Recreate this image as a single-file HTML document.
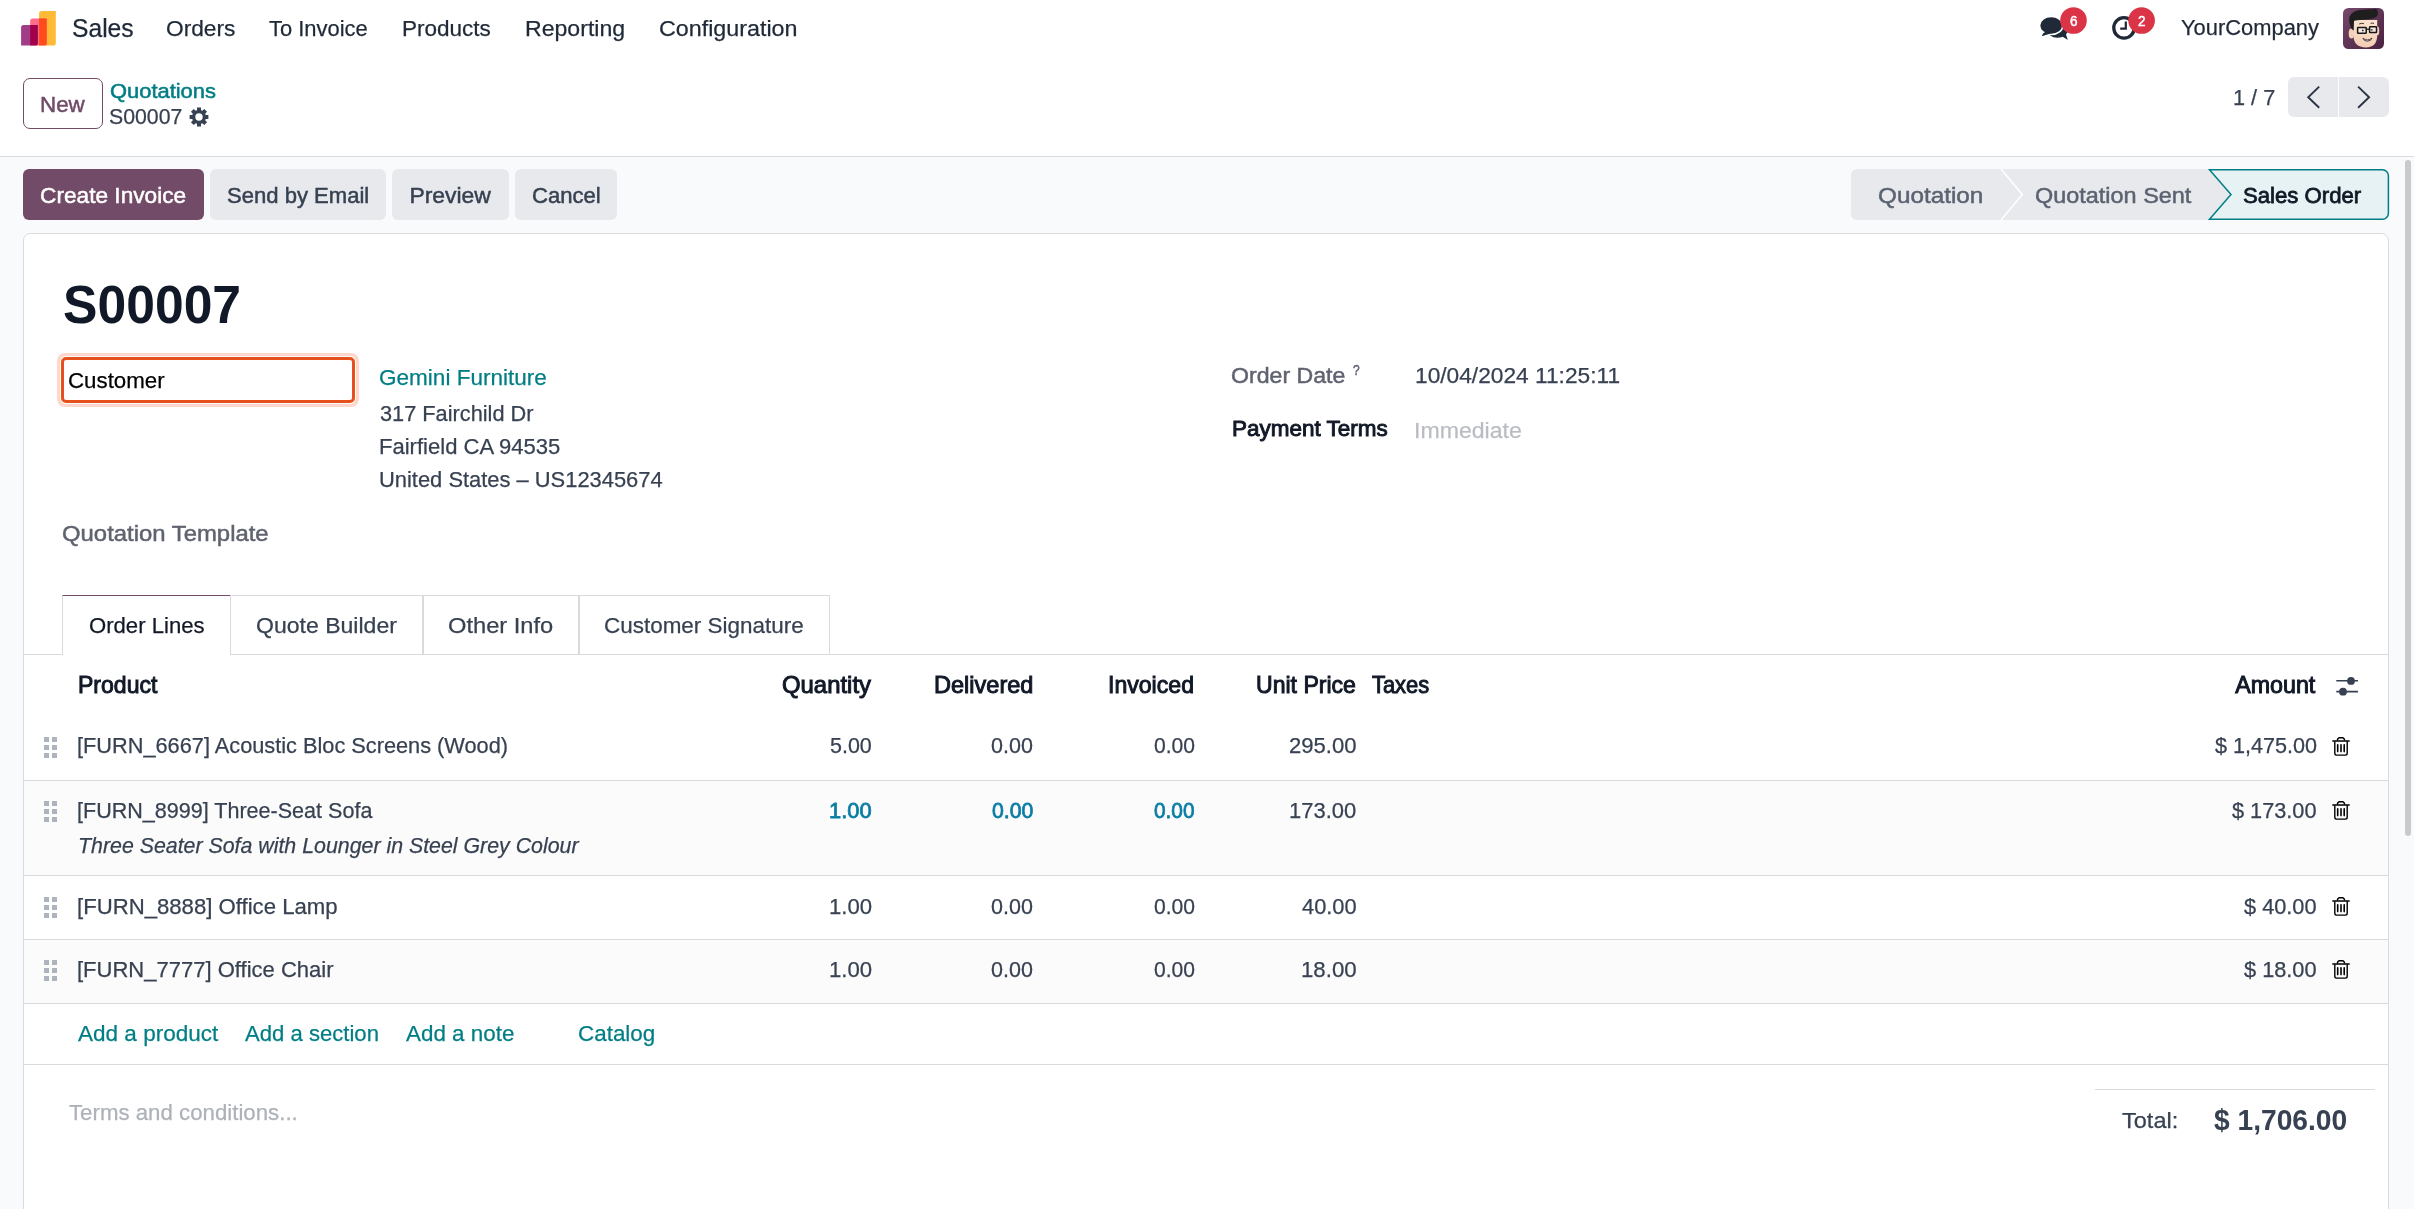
<!DOCTYPE html>
<html><head><meta charset="utf-8"><title>S00007</title>
<style>
html,body{margin:0;padding:0;}
body{width:2414px;height:1209px;overflow:hidden;position:relative;background:#F9FAFB;font-family:"Liberation Sans",sans-serif;}
.a{position:absolute;}
.t{position:absolute;white-space:pre;transform-origin:0 0;font-family:"Liberation Sans",sans-serif;-webkit-text-stroke-width:0.25px;}
.tm{-webkit-text-stroke-width:0.5px;}
.tM{-webkit-text-stroke-width:0.8px;}
.tH{-webkit-text-stroke-width:0.95px;}
.tb{font-weight:bold;}
.tb0{-webkit-text-stroke-width:0;}
.ti{font-style:italic;}
.hd{width:4.7px;height:4.7px;background:#ADB4BC;}
.ln{position:absolute;left:24px;width:2364px;height:1px;background:#D9DBDF;}
.btn2{position:absolute;top:169px;height:51px;background:#E7E9ED;border-radius:6px;}
.tab{position:absolute;top:595px;height:59px;box-sizing:border-box;border:1px solid #D8DADD;border-bottom:none;background:#fff;}
</style></head><body>
<!-- top white area -->
<div class="a" style="left:0;top:0;width:2414px;height:156px;background:#fff"></div>
<div class="a" style="left:0;top:156px;width:2414px;height:1px;background:#D8DADD"></div>
<!-- logo -->
<svg class="a" style="left:21px;top:11px" width="35" height="35" viewBox="0 0 35 35">
<defs>
<clipPath id="cp1"><path d="M2.70 14.10 H16.80 V32.00 A2.6 2.6 0 0 1 14.20 34.60 H0.10 V16.70 A2.6 2.6 0 0 1 2.70 14.10 Z"/></clipPath>
<clipPath id="cp2"><path d="M11.80 7.40 H25.70 V32.00 A2.6 2.6 0 0 1 23.10 34.60 H9.20 V10.00 A2.6 2.6 0 0 1 11.80 7.40 Z"/></clipPath>
</defs>
<path d="M20.70 0.10 H34.80 V32.00 A2.6 2.6 0 0 1 32.20 34.60 H18.10 V2.70 A2.6 2.6 0 0 1 20.70 0.10 Z" fill="#FDBA36"/>
<path d="M11.80 7.40 H25.70 V32.00 A2.6 2.6 0 0 1 23.10 34.60 H9.20 V10.00 A2.6 2.6 0 0 1 11.80 7.40 Z" fill="#FF6D88"/>
<path d="M2.70 14.10 H16.80 V32.00 A2.6 2.6 0 0 1 14.20 34.60 H0.10 V16.70 A2.6 2.6 0 0 1 2.70 14.10 Z" fill="#A13C86"/>
<path d="M11.80 7.40 H25.70 V32.00 A2.6 2.6 0 0 1 23.10 34.60 H9.20 V10.00 A2.6 2.6 0 0 1 11.80 7.40 Z" fill="#A2004A" clip-path="url(#cp1)"/>
<path d="M20.70 0.10 H34.80 V32.00 A2.6 2.6 0 0 1 32.20 34.60 H18.10 V2.70 A2.6 2.6 0 0 1 20.70 0.10 Z" fill="#FF4A1C" clip-path="url(#cp2)"/>
</svg>
<!-- chat icon -->
<svg class="a" style="left:2030px;top:0px" width="130" height="50" viewBox="2030 0 130 50">
<ellipse cx="2057.5" cy="29.8" rx="10.5" ry="8" fill="#1F2937"/>
<path d="M2060 35 L2067.8 39.9 L2065.5 33 Z" fill="#1F2937"/>
<path d="M2045 30.5 L2041.8 35.9 L2050.5 33.2 Z" fill="#1F2937" stroke="#fff" stroke-width="0"/>
<ellipse cx="2051.2" cy="25.5" rx="11.7" ry="9" fill="#1F2937" stroke="#fff" stroke-width="1.6"/>
<path d="M2045.5 31 L2042 35.9 L2051 33.4 Z" fill="#1F2937"/>
<circle cx="2073.5" cy="20.5" r="13.3" fill="#DC3447"/>
<circle cx="2124" cy="27.9" r="10.2" fill="none" stroke="#1F2937" stroke-width="3.3"/>
<path d="M2125.8 21.4 V28.6 H2120.2" fill="none" stroke="#1F2937" stroke-width="2.2"/>
<circle cx="2141.6" cy="20.5" r="13.3" fill="#DC3447"/>
</svg>
<!-- avatar -->
<svg class="a" style="left:2343px;top:8px" width="41" height="41" viewBox="0 0 41 41">
<defs><linearGradient id="ag" x1="0" y1="0" x2="1" y2="1"><stop offset="0" stop-color="#74496B"/><stop offset="1" stop-color="#4A2140"/></linearGradient>
<linearGradient id="sk" x1="0" y1="0" x2="0" y2="1"><stop offset="0" stop-color="#FBE3CF"/><stop offset="1" stop-color="#F3CDB3"/></linearGradient></defs>
<rect x="0" y="0" width="41" height="41" rx="5.5" fill="url(#ag)"/>
<ellipse cx="8.4" cy="25.5" rx="2.7" ry="5" fill="#F4D0B8"/>
<ellipse cx="34.6" cy="23" rx="1.6" ry="4.4" fill="#F4D0B8"/>
<path d="M10.4 12 H34.2 V27 Q34.2 39.4 23 39.4 Q10.4 39.4 10.4 27 Z" fill="url(#sk)"/>
<path d="M6.3 9 Q9 2.6 17 1.9 Q25 1.2 31 1.2 L31.6 0.4 Q35.6 1.6 34.8 4.6 Q35.4 8 33 9 Q28 11.6 20 11.8 Q13 12.1 11 13 L10.6 22.5 Q8.6 21.5 7.8 19.5 Q5.6 14 6.3 9 Z" fill="#1E1E1E"/>
<path d="M16.2 16 Q18.5 14.8 20.8 15.6 M27.6 15.4 Q29.4 14.6 31 15.4" fill="none" stroke="#333" stroke-width="1"/>
<rect x="14.6" y="19.4" width="8.6" height="5.9" rx="0.6" fill="#F6E9E2" stroke="#151515" stroke-width="1.5"/>
<rect x="26.6" y="18.8" width="6.9" height="5.7" rx="0.6" fill="#F6E9E2" stroke="#151515" stroke-width="1.5"/>
<path d="M23.2 21.2 H26.6" stroke="#151515" stroke-width="1.2"/>
<circle cx="19.8" cy="22.4" r="0.9" fill="#333"/><circle cx="28.8" cy="21.8" r="0.9" fill="#333"/>
<path d="M19.9 30.2 Q24.5 33.8 29 30 Q28.5 32.8 24.4 33.2 Q20.8 33.2 19.9 30.2 Z" fill="#fff" stroke="#3a2a2a" stroke-width="0.9"/>
</svg>
<!-- new button -->
<div class="a" style="left:23px;top:78px;width:78px;height:49px;border:1px solid #714B67;border-radius:7px;background:#fff"></div>
<!-- gear -->
<svg class="a" style="left:189.3px;top:106.7px" width="20" height="20" viewBox="0 0 20 20"><path d="M8.00 3.29 L8.00 0.61 L12.00 0.61 L12.00 3.29 L13.33 3.84 L15.23 1.95 L18.05 4.77 L16.16 6.67 L16.71 8.00 L19.39 8.00 L19.39 12.00 L16.71 12.00 L16.16 13.33 L18.05 15.23 L15.23 18.05 L13.33 16.16 L12.00 16.71 L12.00 19.39 L8.00 19.39 L8.00 16.71 L6.67 16.16 L4.77 18.05 L1.95 15.23 L3.84 13.33 L3.29 12.00 L0.61 12.00 L0.61 8.00 L3.29 8.00 L3.84 6.67 L1.95 4.77 L4.77 1.95 L6.67 3.84 Z M13.70 10.00 A3.7 3.7 0 1 0 6.30 10.00 A3.7 3.7 0 1 0 13.70 10.00 Z" fill="#374151" fill-rule="evenodd"/></svg>
<!-- pager -->
<div class="a" style="left:2288px;top:77px;width:101px;height:40px;background:#E7E9ED;border-radius:6px"></div>
<div class="a" style="left:2338px;top:77px;width:1px;height:40px;background:#fff"></div>
<svg class="a" style="left:2288px;top:77px" width="101" height="40" viewBox="0 0 101 40">
<path d="M31.2 9.6 L20.2 20.2 L31.2 30.8" fill="none" stroke="#2B3544" stroke-width="1.9"/>
<path d="M70.1 9.6 L81.1 20.2 L70.1 30.8" fill="none" stroke="#2B3544" stroke-width="1.9"/>
</svg>
<!-- action buttons -->
<div class="btn2" style="left:23px;width:181px;background:#714B67"></div>
<div class="btn2" style="left:210px;width:176px"></div>
<div class="btn2" style="left:392px;width:117px"></div>
<div class="btn2" style="left:515px;width:102px"></div>
<!-- statusbar -->
<svg class="a" style="left:1851px;top:169px" width="540" height="52" viewBox="0 0 540 52">
<path d="M6 0 H358.5 L380 25.5 L358.5 51 H6 A6 6 0 0 1 0 45 V6 A6 6 0 0 1 6 0 Z" fill="#E7E9ED"/>
<path d="M150 0 L171.3 25.5 L150 51" stroke="#fff" stroke-width="1.6" fill="none"/>
<path d="M358.5 0.75 H531.5 A6 6 0 0 1 537.4 6.75 V44.25 A6 6 0 0 1 531.5 50.25 H358.5 L380 25.5 Z" fill="#E6F2F3" stroke="#017E84" stroke-width="1.5"/>
</svg>
<!-- scrollbar thumb -->
<div class="a" style="left:2405px;top:160px;width:6px;height:676px;border-radius:3px;background:#C9CACB"></div>
<!-- sheet -->
<div class="a" style="left:23px;top:233px;width:2364px;height:1100px;border:1px solid #D8DADD;border-radius:7.5px;background:#fff"></div>
<!-- customer input -->
<div class="a" style="left:57px;top:353px;width:302px;height:54px;border-radius:8px;background:#FFD6CA"></div>
<div class="a" style="left:60px;top:356px;width:296px;height:48px;border-radius:6px;background:#fff"></div>
<div class="a" style="left:61px;top:357px;width:288px;height:40px;border:3px solid #E6501B;border-radius:5px;background:#fff"></div>
<!-- tabs -->
<div class="a" style="left:24px;top:654px;width:2364px;height:1px;background:#D8DADD"></div>
<div class="tab" style="left:62px;width:169px;height:60px;border-top-color:#714B67"></div>
<div class="tab" style="left:230px;width:193px"></div>
<div class="tab" style="left:423px;width:156px"></div>
<div class="tab" style="left:579px;width:251px"></div>
<!-- stripes -->
<div class="a" style="left:24px;top:781px;width:2364px;height:94px;background:#FBFBFB"></div>
<div class="a" style="left:24px;top:940px;width:2364px;height:63px;background:#FBFBFB"></div>
<div class="ln" style="top:780px"></div>
<div class="ln" style="top:875px"></div>
<div class="ln" style="top:939px"></div>
<div class="ln" style="top:1003px"></div>
<div class="ln" style="top:1064px"></div>
<div class="a hd" style="left:44.3px;top:737.05px"></div>
<div class="a hd" style="left:44.3px;top:745.05px"></div>
<div class="a hd" style="left:44.3px;top:753.05px"></div>
<div class="a hd" style="left:52.3px;top:737.05px"></div>
<div class="a hd" style="left:52.3px;top:745.05px"></div>
<div class="a hd" style="left:52.3px;top:753.05px"></div>
<div class="a hd" style="left:44.3px;top:801.05px"></div>
<div class="a hd" style="left:44.3px;top:809.05px"></div>
<div class="a hd" style="left:44.3px;top:817.05px"></div>
<div class="a hd" style="left:52.3px;top:801.05px"></div>
<div class="a hd" style="left:52.3px;top:809.05px"></div>
<div class="a hd" style="left:52.3px;top:817.05px"></div>
<div class="a hd" style="left:44.3px;top:897.35px"></div>
<div class="a hd" style="left:44.3px;top:905.35px"></div>
<div class="a hd" style="left:44.3px;top:913.35px"></div>
<div class="a hd" style="left:52.3px;top:897.35px"></div>
<div class="a hd" style="left:52.3px;top:905.35px"></div>
<div class="a hd" style="left:52.3px;top:913.35px"></div>
<div class="a hd" style="left:44.3px;top:959.95px"></div>
<div class="a hd" style="left:44.3px;top:967.95px"></div>
<div class="a hd" style="left:44.3px;top:975.95px"></div>
<div class="a hd" style="left:52.3px;top:959.95px"></div>
<div class="a hd" style="left:52.3px;top:967.95px"></div>
<div class="a hd" style="left:52.3px;top:975.95px"></div>
<svg class="a" style="left:2332px;top:736.7px" width="18" height="19" viewBox="0 0 18 19"><path d="M5.3 3.6 Q5.6 0.7 7.6 0.7 H10.4 Q12.3 0.7 12.7 3.6" fill="none" stroke="#000" stroke-width="1.4"/><path d="M0.3 4 H17.7" stroke="#000" stroke-width="1.5"/><path d="M2.8 4.3 V16.3 Q2.8 18.1 4.6 18.1 H13.4 Q15.2 18.1 15.2 16.3 V4.3" fill="none" stroke="#000" stroke-width="1.4"/><path d="M5.7 7.8 V14.6 M9 7.8 V14.6 M12.2 7.8 V14.6" stroke="#000" stroke-width="1.6" stroke-linecap="round"/></svg>
<svg class="a" style="left:2332px;top:800.9px" width="18" height="19" viewBox="0 0 18 19"><path d="M5.3 3.6 Q5.6 0.7 7.6 0.7 H10.4 Q12.3 0.7 12.7 3.6" fill="none" stroke="#000" stroke-width="1.4"/><path d="M0.3 4 H17.7" stroke="#000" stroke-width="1.5"/><path d="M2.8 4.3 V16.3 Q2.8 18.1 4.6 18.1 H13.4 Q15.2 18.1 15.2 16.3 V4.3" fill="none" stroke="#000" stroke-width="1.4"/><path d="M5.7 7.8 V14.6 M9 7.8 V14.6 M12.2 7.8 V14.6" stroke="#000" stroke-width="1.6" stroke-linecap="round"/></svg>
<svg class="a" style="left:2332px;top:897.2px" width="18" height="19" viewBox="0 0 18 19"><path d="M5.3 3.6 Q5.6 0.7 7.6 0.7 H10.4 Q12.3 0.7 12.7 3.6" fill="none" stroke="#000" stroke-width="1.4"/><path d="M0.3 4 H17.7" stroke="#000" stroke-width="1.5"/><path d="M2.8 4.3 V16.3 Q2.8 18.1 4.6 18.1 H13.4 Q15.2 18.1 15.2 16.3 V4.3" fill="none" stroke="#000" stroke-width="1.4"/><path d="M5.7 7.8 V14.6 M9 7.8 V14.6 M12.2 7.8 V14.6" stroke="#000" stroke-width="1.6" stroke-linecap="round"/></svg>
<svg class="a" style="left:2332px;top:960.2px" width="18" height="19" viewBox="0 0 18 19"><path d="M5.3 3.6 Q5.6 0.7 7.6 0.7 H10.4 Q12.3 0.7 12.7 3.6" fill="none" stroke="#000" stroke-width="1.4"/><path d="M0.3 4 H17.7" stroke="#000" stroke-width="1.5"/><path d="M2.8 4.3 V16.3 Q2.8 18.1 4.6 18.1 H13.4 Q15.2 18.1 15.2 16.3 V4.3" fill="none" stroke="#000" stroke-width="1.4"/><path d="M5.7 7.8 V14.6 M9 7.8 V14.6 M12.2 7.8 V14.6" stroke="#000" stroke-width="1.6" stroke-linecap="round"/></svg>
<!-- sliders icon -->
<svg class="a" style="left:2336px;top:676px" width="23" height="21" viewBox="0 0 23 21">
<path d="M0.3 4.8 H22 M0.3 15.6 H22" stroke="#374151" stroke-width="1.6"/>
<circle cx="15" cy="4.9" r="3.9" fill="#374151"/>
<circle cx="7" cy="15.7" r="3.9" fill="#374151"/>
</svg>
<!-- total line -->
<div class="a" style="left:2095px;top:1089px;width:280px;height:1px;background:#D8DADD"></div>
<div class="a" style="left:0;top:0;width:2414px;height:1209px;will-change:transform">
<div class="t" style="left:71.85px;top:16px;font-size:25.29px;line-height:25.29px;color:#1F2937;transform:scaleX(0.9749);">Sales</div>
<div class="t" style="left:166.23px;top:17px;font-size:22.9px;line-height:22.9px;color:#1F2937;transform:scaleX(0.9918);">Orders</div>
<div class="t" style="left:269.32px;top:17px;font-size:22.9px;line-height:22.9px;color:#1F2937;transform:scaleX(0.9583);">To Invoice</div>
<div class="t" style="left:402.14px;top:17px;font-size:22.9px;line-height:22.9px;color:#1F2937;transform:scaleX(0.9839);">Products</div>
<div class="t" style="left:524.92px;top:17px;font-size:22.9px;line-height:22.9px;color:#1F2937;transform:scaleX(1.0085);">Reporting</div>
<div class="t" style="left:658.61px;top:17px;font-size:22.9px;line-height:22.9px;color:#1F2937;transform:scaleX(1.0172);">Configuration</div>
<div class="t" style="left:2180.92px;top:16px;font-size:22.9px;line-height:22.9px;color:#1F2937;transform:scaleX(0.9564);">YourCompany</div>
<div class="t tm" style="left:40.27px;top:93px;font-size:22.9px;line-height:22.9px;color:#714B67;transform:scaleX(0.9768);">New</div>
<div class="t tm" style="left:110.28px;top:82px;font-size:19.48px;line-height:19.48px;color:#017E84;transform:scaleX(1.1251);">Quotations</div>
<div class="t" style="left:109.19px;top:105px;font-size:22.9px;line-height:22.9px;color:#374151;transform:scaleX(0.9297);">S00007</div>
<div class="t" style="left:2232.97px;top:86px;font-size:22.9px;line-height:22.9px;color:#374151;transform:scaleX(0.9475);">1 / 7</div>
<div class="t tm" style="left:40.26px;top:184px;font-size:22.9px;line-height:22.9px;color:#FFFFFF;transform:scaleX(0.9907);">Create Invoice</div>
<div class="t tm" style="left:226.88px;top:184px;font-size:22.9px;line-height:22.9px;color:#374151;transform:scaleX(0.9636);">Send by Email</div>
<div class="t tm" style="left:409.45px;top:184px;font-size:22.9px;line-height:22.9px;color:#374151;">Preview</div>
<div class="t tm" style="left:531.98px;top:184px;font-size:22.9px;line-height:22.9px;color:#374151;transform:scaleX(0.9646);">Cancel</div>
<div class="t tm" style="left:1877.80px;top:184px;font-size:22.9px;line-height:22.9px;color:#5B6270;transform:scaleX(1.0609);">Quotation</div>
<div class="t tm" style="left:2034.63px;top:184px;font-size:22.9px;line-height:22.9px;color:#5B6270;transform:scaleX(1.0239);">Quotation Sent</div>
<div class="t tM" style="left:2242.92px;top:184px;font-size:22.9px;line-height:22.9px;color:#111827;transform:scaleX(0.9680);">Sales Order</div>
<div class="t tb tb0" style="left:62.95px;top:277px;font-size:54.19px;line-height:54.19px;color:#111827;transform:scaleX(0.9532);">S00007</div>
<div class="t" style="left:68.15px;top:369px;font-size:22.9px;line-height:22.9px;color:#000000;transform:scaleX(0.9742);">Customer</div>
<div class="t" style="left:378.74px;top:366px;font-size:22.9px;line-height:22.9px;color:#017E84;transform:scaleX(0.9847);">Gemini Furniture</div>
<div class="t" style="left:379.72px;top:402px;font-size:22.9px;line-height:22.9px;color:#374151;transform:scaleX(0.9501);">317 Fairchild Dr</div>
<div class="t" style="left:378.76px;top:435px;font-size:22.9px;line-height:22.9px;color:#374151;transform:scaleX(0.9628);">Fairfield CA 94535</div>
<div class="t" style="left:378.76px;top:468px;font-size:22.9px;line-height:22.9px;color:#374151;transform:scaleX(0.9566);">United States – US12345674</div>
<div class="t tm" style="left:62.42px;top:522px;font-size:22.9px;line-height:22.9px;color:#5F636F;transform:scaleX(1.0432);">Quotation Template</div>
<div class="t tm" style="left:1231.44px;top:364px;font-size:22.9px;line-height:22.9px;color:#5F636F;transform:scaleX(1.0099);">Order Date</div>
<div class="t tm" style="left:1353.21px;top:363px;font-size:14.53px;line-height:14.53px;color:#5F636F;transform:scaleX(0.8235);">?</div>
<div class="t" style="left:1414.83px;top:364px;font-size:22.9px;line-height:22.9px;color:#374151;transform:scaleX(0.9925);">10/04/2024 11:25:11</div>
<div class="t tH" style="left:1231.68px;top:417px;font-size:22.9px;line-height:22.9px;color:#111827;transform:scaleX(0.9823);">Payment Terms</div>
<div class="t" style="left:1413.81px;top:419px;font-size:22.9px;line-height:22.9px;color:#B9BDC3;transform:scaleX(1.0088);">Immediate</div>
<div class="t" style="left:88.75px;top:614px;font-size:22.9px;line-height:22.9px;color:#111827;transform:scaleX(0.9662);">Order Lines</div>
<div class="t" style="left:256.12px;top:614px;font-size:22.9px;line-height:22.9px;color:#374151;transform:scaleX(1.0065);">Quote Builder</div>
<div class="t" style="left:448.10px;top:614px;font-size:22.9px;line-height:22.9px;color:#374151;transform:scaleX(1.0338);">Other Info</div>
<div class="t" style="left:604.14px;top:614px;font-size:22.9px;line-height:22.9px;color:#374151;transform:scaleX(0.9808);">Customer Signature</div>
<div class="t tH" style="left:78.48px;top:674px;font-size:23.26px;line-height:23.26px;color:#111827;transform:scaleX(0.9911);">Product</div>
<div class="t tH" style="left:781.96px;top:674px;font-size:23.26px;line-height:23.26px;color:#111827;transform:scaleX(1.0275);">Quantity</div>
<div class="t tH" style="left:933.77px;top:674px;font-size:23.26px;line-height:23.26px;color:#111827;transform:scaleX(1.0120);">Delivered</div>
<div class="t tH" style="left:1108.49px;top:674px;font-size:23.26px;line-height:23.26px;color:#111827;transform:scaleX(0.9927);">Invoiced</div>
<div class="t tH" style="left:1256.48px;top:674px;font-size:23.26px;line-height:23.26px;color:#111827;transform:scaleX(0.9910);">Unit Price</div>
<div class="t tH" style="left:1372.25px;top:674px;font-size:23.26px;line-height:23.26px;color:#111827;transform:scaleX(0.9401);">Taxes</div>
<div class="t tH" style="left:2235.17px;top:674px;font-size:23.26px;line-height:23.26px;color:#111827;">Amount</div>
<div class="t" style="left:77.47px;top:734px;font-size:22.9px;line-height:22.9px;color:#374151;transform:scaleX(0.9498);">[FURN_6667] Acoustic Bloc Screens (Wood)</div>
<div class="t" style="left:830.42px;top:734px;font-size:22.9px;line-height:22.9px;color:#374151;transform:scaleX(0.9371);">5.00</div>
<div class="t" style="left:991.42px;top:734px;font-size:22.9px;line-height:22.9px;color:#374151;transform:scaleX(0.9394);">0.00</div>
<div class="t" style="left:1153.52px;top:734px;font-size:22.9px;line-height:22.9px;color:#374151;transform:scaleX(0.9212);">0.00</div>
<div class="t" style="left:1288.96px;top:734px;font-size:22.9px;line-height:22.9px;color:#374151;transform:scaleX(0.9645);">295.00</div>
<div class="t" style="left:2214.72px;top:734px;font-size:22.9px;line-height:22.9px;color:#374151;transform:scaleX(0.9432);">$ 1,475.00</div>
<div class="t" style="left:77.48px;top:799px;font-size:22.9px;line-height:22.9px;color:#374151;transform:scaleX(0.9411);">[FURN_8999] Three-Seat Sofa</div>
<div class="t tM" style="left:829.33px;top:799px;font-size:22.9px;line-height:22.9px;color:#0A7DA5;transform:scaleX(0.9560);">1.00</div>
<div class="t tM" style="left:991.67px;top:799px;font-size:22.9px;line-height:22.9px;color:#0A7DA5;transform:scaleX(0.9278);">0.00</div>
<div class="t tM" style="left:1153.76px;top:799px;font-size:22.9px;line-height:22.9px;color:#0A7DA5;transform:scaleX(0.9099);">0.00</div>
<div class="t" style="left:1289.06px;top:799px;font-size:22.9px;line-height:22.9px;color:#374151;transform:scaleX(0.9601);">173.00</div>
<div class="t" style="left:2232.32px;top:799px;font-size:22.9px;line-height:22.9px;color:#374151;transform:scaleX(0.9478);">$ 173.00</div>
<div class="t ti" style="left:77.75px;top:834px;font-size:22.9px;line-height:22.9px;color:#374151;transform:scaleX(0.9322);">Three Seater Sofa with Lounger in Steel Grey Colour</div>
<div class="t" style="left:77.45px;top:895px;font-size:22.9px;line-height:22.9px;color:#374151;transform:scaleX(0.9674);">[FURN_8888] Office Lamp</div>
<div class="t" style="left:829.05px;top:895px;font-size:22.9px;line-height:22.9px;color:#374151;transform:scaleX(0.9682);">1.00</div>
<div class="t" style="left:991.42px;top:895px;font-size:22.9px;line-height:22.9px;color:#374151;transform:scaleX(0.9394);">0.00</div>
<div class="t" style="left:1153.52px;top:895px;font-size:22.9px;line-height:22.9px;color:#374151;transform:scaleX(0.9212);">0.00</div>
<div class="t" style="left:1301.62px;top:895px;font-size:22.9px;line-height:22.9px;color:#374151;transform:scaleX(0.9542);">40.00</div>
<div class="t" style="left:2244.22px;top:895px;font-size:22.9px;line-height:22.9px;color:#374151;transform:scaleX(0.9500);">$ 40.00</div>
<div class="t" style="left:77.46px;top:958px;font-size:22.9px;line-height:22.9px;color:#374151;transform:scaleX(0.9615);">[FURN_7777] Office Chair</div>
<div class="t" style="left:829.05px;top:958px;font-size:22.9px;line-height:22.9px;color:#374151;transform:scaleX(0.9682);">1.00</div>
<div class="t" style="left:991.42px;top:958px;font-size:22.9px;line-height:22.9px;color:#374151;transform:scaleX(0.9394);">0.00</div>
<div class="t" style="left:1153.52px;top:958px;font-size:22.9px;line-height:22.9px;color:#374151;transform:scaleX(0.9212);">0.00</div>
<div class="t" style="left:1300.65px;top:958px;font-size:22.9px;line-height:22.9px;color:#374151;transform:scaleX(0.9713);">18.00</div>
<div class="t" style="left:2244.22px;top:958px;font-size:22.9px;line-height:22.9px;color:#374151;transform:scaleX(0.9500);">$ 18.00</div>
<div class="t" style="left:78.12px;top:1022px;font-size:22.9px;line-height:22.9px;color:#017E84;transform:scaleX(0.9845);">Add a product</div>
<div class="t" style="left:245.02px;top:1022px;font-size:22.9px;line-height:22.9px;color:#017E84;transform:scaleX(0.9658);">Add a section</div>
<div class="t" style="left:405.52px;top:1022px;font-size:22.9px;line-height:22.9px;color:#017E84;transform:scaleX(0.9787);">Add a note</div>
<div class="t" style="left:577.84px;top:1022px;font-size:22.9px;line-height:22.9px;color:#017E84;transform:scaleX(0.9791);">Catalog</div>
<div class="t" style="left:69.22px;top:1101px;font-size:22.9px;line-height:22.9px;color:#ADB1B8;transform:scaleX(0.9720);">Terms and conditions...</div>
<div class="t" style="left:2122.13px;top:1109px;font-size:22.9px;line-height:22.9px;color:#374151;transform:scaleX(1.0280);">Total:</div>
<div class="t tb tb0" style="left:2214.30px;top:1105px;font-size:29.47px;line-height:29.47px;color:#374151;transform:scaleX(0.9561);">$ 1,706.00</div>
<div class="t tm" style="left:2070.24px;top:14px;font-size:14.39px;line-height:14.39px;color:#FFFFFF;transform:scaleX(0.9412);">6</div>
<div class="t tm" style="left:2137.74px;top:14px;font-size:14.39px;line-height:14.39px;color:#FFFFFF;transform:scaleX(0.9412);">2</div>
</div>
</body></html>
